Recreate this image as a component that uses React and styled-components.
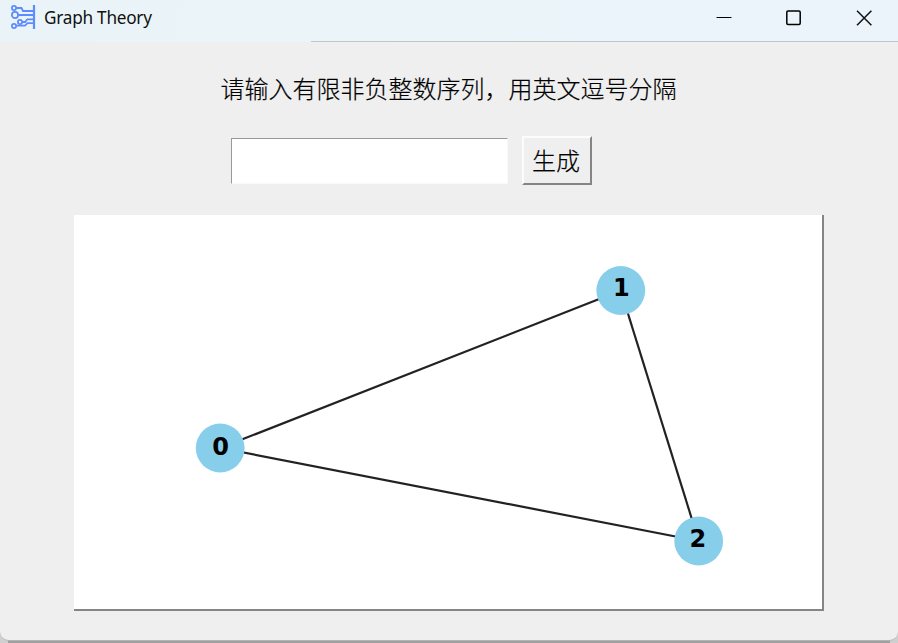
import React, { useState } from "react";
import styled, { createGlobalStyle } from "styled-components";

const GlobalStyle = createGlobalStyle`
  * { box-sizing: border-box; }
  body { margin: 0; background: #a3a3a3; overflow: hidden; }
`;

const Window = styled.div`
  width: 898px;
  height: 643px;
  background: #cfcfcf linear-gradient(#a0a0a0, #a0a0a0) 8px 100% / 882px 3px no-repeat;
`;

const Frame = styled.div`
  height: 641px;
  display: flex;
  flex-direction: column;
  background: #efefef;
  border-bottom: 1px solid #b4b4b4;
  border-radius: 0 0 9px 9px;
  overflow: hidden;
`;

const TitleBar = styled.header`
  height: 42px;
  flex: none;
  display: flex;
  padding-left: 10px;
  background:
    linear-gradient(#c2c6c9, #c2c6c9) 311px 41px / 587px 1px no-repeat,
    linear-gradient(100deg, #eaf4f8 0%, #eaf4f9 45%, #ebf4fb 100%);
`;

const AppIcon = styled.svg`
  width: 26px;
  height: 26px;
  margin-top: 4px;
`;

const Title = styled.h1`
  margin: 0 auto 0 8px;
  font: 400 17.2px/36px "Noto Sans", sans-serif;
  letter-spacing: -0.25px;
  color: #111;
`;

const Caption = styled.button`
  width: 70px;
  height: 35px;
  padding: 0;
  border: 0;
  background: none;
  display: grid;
  place-items: center;
`;

const CaptionGroup = styled.div`
  display: flex;
  margin-right: -1px;
`;

const Content = styled.main`
  flex: 1;
  display: flex;
  flex-direction: column;
  align-items: center;
`;

const Prompt = styled.label`
  margin-top: 28px;
  padding-right: 1px;
  height: 36px;
  font: 300 24px/36px "Noto Sans CJK SC", sans-serif;
  color: #000;
  -webkit-text-stroke: 0.2px #000;
  white-space: nowrap;
`;

const Controls = styled.form`
  display: flex;
  align-items: center;
  gap: 14px;
  margin-top: 30px;
  padding-right: 75px;
`;

const SequenceInput = styled.input`
  width: 277px;
  height: 46px;
  margin-top: 1px;
  padding: 0 8px;
  border: 1px solid #fafafa;
  border-top: 1px solid #999;
  border-left: 1px solid #999;
  border-radius: 0;
  background: #fff;
  font: 24px "Noto Sans CJK SC", sans-serif;
  outline: none;
`;

const GenerateButton = styled.button`
  width: 70px;
  height: 49px;
  padding: 0 2px 1px 0;
  border: 2px solid;
  border-color: #fcfcfc #858585 #858585 #fcfcfc;
  background: #efefef;
  font: 300 24px/36px "Noto Sans CJK SC", sans-serif;
  color: #000;
  -webkit-text-stroke: 0.2px #000;
`;

const GraphPanel = styled.section`
  width: 750px;
  height: 396px;
  margin-top: 30px;
  background: #fff;
  border-right: 2px solid #858585;
  border-bottom: 2px solid #858585;
`;

const GraphCanvas = styled.svg`
  display: block;
  width: 748px;
  height: 394px;
`;

const NodeLabel = styled.text`
  font: 700 24px "DejaVu Sans", sans-serif;
  text-anchor: middle;
  fill: #000;
`;

const nodes = [
  { id: 0, x: 146.2, y: 233, labelX: 146.5, labelY: 240 },
  { id: 1, x: 546.8, y: 75.5, labelX: 547.3, labelY: 81 },
  { id: 2, x: 624.7, y: 326, labelX: 623.8, labelY: 332 },
];

const edges = [[0, 1], [0, 2], [1, 2]];

function Graph() {
  return (
    <GraphCanvas viewBox="0 0 748 394">
      {edges.map(([a, b]) => (
        <line
          key={`${a}-${b}`}
          x1={nodes[a].x} y1={nodes[a].y}
          x2={nodes[b].x} y2={nodes[b].y}
          stroke="#222" strokeWidth="2.2"
        />
      ))}
      {nodes.map((n) => (
        <g key={n.id}>
          <circle cx={n.x} cy={n.y} r="24.4" fill="#87ceeb" />
          <NodeLabel x={n.labelX} y={n.labelY}>{n.id}</NodeLabel>
        </g>
      ))}
    </GraphCanvas>
  );
}

export default function App() {
  const [value, setValue] = useState("");
  return (
    <Window>
      <GlobalStyle />
      <Frame>
        <TitleBar>
          <AppIcon viewBox="0 0 26 26" fill="none" stroke="#5f8cfb" strokeWidth="1.8">
            <path d="M24 1v24" strokeWidth="2.2" />
            <circle cx="4" cy="4" r="2.1" />
            <circle cx="5" cy="11" r="3.1" />
            <circle cx="10" cy="18" r="2.1" />
            <circle cx="4" cy="22" r="2.1" />
            <path d="M6.2 4H11.5l1.5 3H24M8.2 11H24M12.2 18h3l2-2.7H24M6.2 21.7H15l2.5-2.5H24" />
          </AppIcon>
          <Title>Graph Theory</Title>
          <CaptionGroup>
            <Caption aria-label="Minimize">
              <svg width="16" height="16"><path d="M.5 7.5h15" stroke="#000" /></svg>
            </Caption>
            <Caption aria-label="Maximize">
              <svg width="16" height="16" fill="none" stroke="#000" strokeWidth="1.5">
                <rect x="0.8" y="1" width="13.4" height="13.4" rx="1.2" />
              </svg>
            </Caption>
            <Caption aria-label="Close">
              <svg width="16" height="16" fill="none" stroke="#111" strokeWidth="1.5">
                <path d="M1 .8l14.4 14.4M15.4.8 1 15.2" />
              </svg>
            </Caption>
          </CaptionGroup>
        </TitleBar>
        <Content>
          <Prompt htmlFor="sequence">请输入有限非负整数序列，用英文逗号分隔</Prompt>
          <Controls onSubmit={(e) => e.preventDefault()}>
            <SequenceInput id="sequence" value={value} onChange={(e) => setValue(e.target.value)} />
            <GenerateButton>生成</GenerateButton>
          </Controls>
          <GraphPanel>
            <Graph />
          </GraphPanel>
        </Content>
      </Frame>
    </Window>
  );
}
